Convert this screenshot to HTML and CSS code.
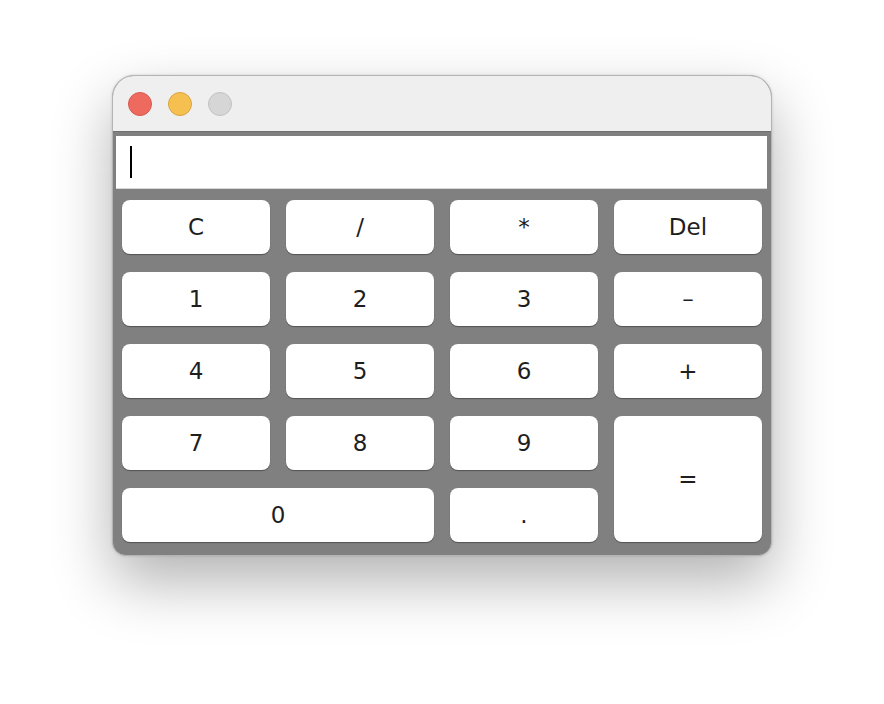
FILE: index.html
```html
<!DOCTYPE html>
<html>
<head>
<meta charset="utf-8">
<link rel="stylesheet" href="styles.css">
</head>
<body>
<div class="window">
  <div class="titlebar">
    <span class="light red"></span>
    <span class="light yellow"></span>
    <span class="light gray"></span>
  </div>
  <div class="content">
    <div class="display"><span class="caret"></span></div>
    <div class="keys">
      <button class="key">C</button>
      <button class="key">/</button>
      <button class="key">*</button>
      <button class="key">Del</button>
      <button class="key">1</button>
      <button class="key">2</button>
      <button class="key">3</button>
      <button class="key">–</button>
      <button class="key">4</button>
      <button class="key">5</button>
      <button class="key">6</button>
      <button class="key">+</button>
      <button class="key">7</button>
      <button class="key">8</button>
      <button class="key">9</button>
      <button class="key equals">=</button>
      <button class="key zero">0</button>
      <button class="key">.</button>
    </div>
  </div>
</div>
</body>
</html>
```

FILE: styles.css
```css
html, body {
  margin: 0;
  background: #ffffff;
}
html {
  height: 100%;
}
body {
  box-sizing: border-box;
  min-height: 100%;
  padding: 75px 0 0 112px;
  font-family: "DejaVu Sans", "Liberation Sans", sans-serif;
}
.window {
  box-sizing: border-box;
  width: 660px;
  height: 481px;
  border: 1px solid #b4b4b4;
  border-radius: 22px 22px 14px 14px;
  background: #808080;
  overflow: hidden;
  box-shadow: 0 26px 60px rgba(0, 0, 0, 0.3), 0 0 3px rgba(0, 0, 0, 0.15);
  display: flex;
  flex-direction: column;
}
.titlebar {
  height: 55px;
  background: #efefef;
  border-bottom: 1px solid #6f6f6f;
  display: flex;
  align-items: center;
  gap: 16px;
  padding-left: 15px;
}
.light {
  box-sizing: border-box;
  width: 24px;
  height: 24px;
  border-radius: 50%;
  display: block;
}
.red { background: #ee6a5f; border: 1px solid #d55a4f; }
.yellow { background: #f5c04f; border: 1px solid #d9a440; }
.gray { background: #d6d6d6; border: 1px solid #c0c0c0; }
.content {
  flex: 1;
  display: flex;
  flex-direction: column;
}
.display {
  height: 52px;
  margin: 4px 4px 0 3px;
  background: #ffffff;
  border-bottom: 1px solid #d8d8d8;
  display: flex;
  align-items: center;
  padding-left: 14px;
}
.caret {
  display: block;
  width: 2px;
  height: 32px;
  background: #000;
}
.keys {
  margin: 11px 0 0 9px;
  display: grid;
  grid-template-columns: repeat(4, 148px);
  grid-template-rows: repeat(5, 54px);
  column-gap: 16px;
  row-gap: 18px;
}
.key {
  border: none;
  margin: 0;
  padding: 0;
  background: #ffffff;
  border-radius: 8px;
  box-shadow: 0 1px 1px rgba(0, 0, 0, 0.35);
  font-family: "DejaVu Sans", "Liberation Sans", sans-serif;
  font-size: 23px;
  color: #1e1e1e;
  display: flex;
  align-items: center;
  justify-content: center;
}
.equals {
  grid-column: 4;
  grid-row: 4 / span 2;
}
.zero {
  grid-column: 1 / span 2;
}
```
